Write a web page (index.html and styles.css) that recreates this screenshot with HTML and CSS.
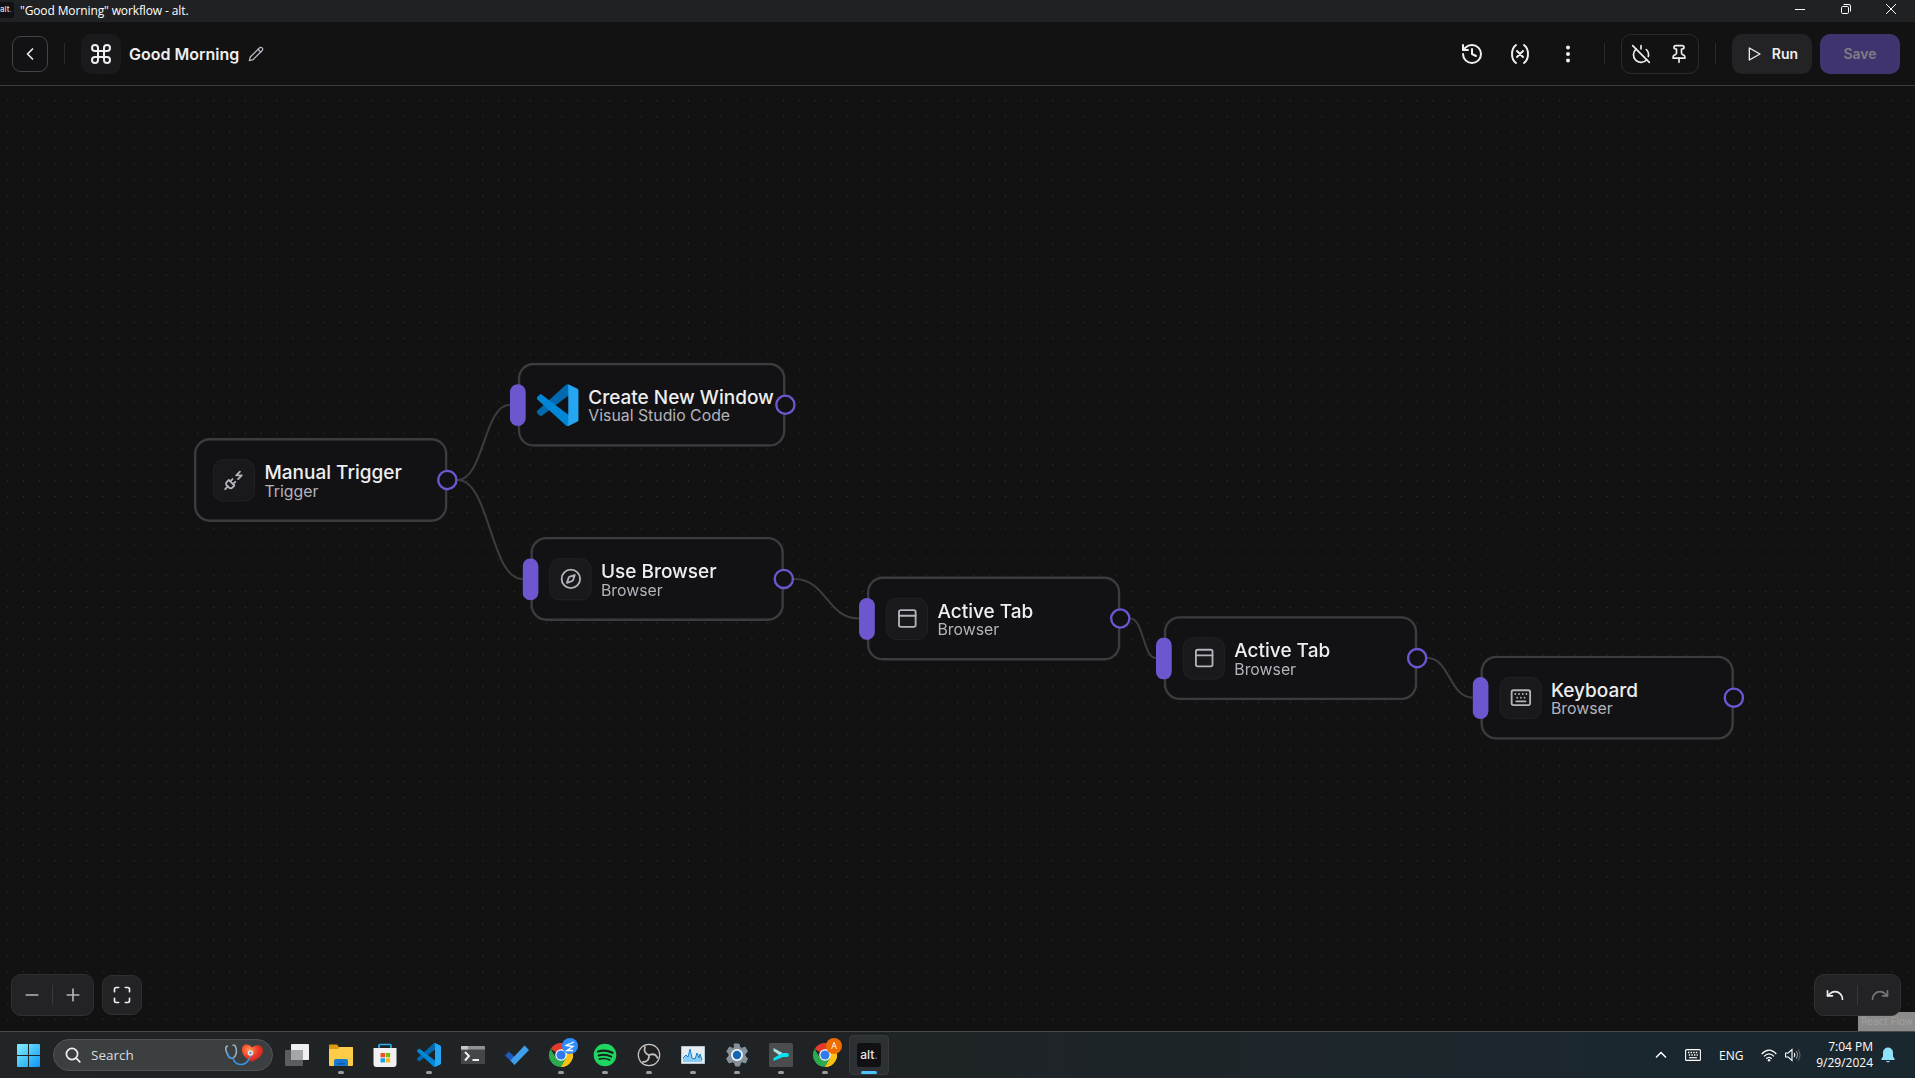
FILE: index.html
```html
<!DOCTYPE html>
<html lang="en">
<head>
<meta charset="utf-8">
<title>"Good Morning" workflow - alt.</title>
<link rel="stylesheet" href="styles.css">
</head>
<body>
<svg class="sprite" aria-hidden="true">
  <symbol id="vscode" viewBox="0 0 100 100">
    <path fill="#0069b0" d="M96.46 10.8 75.86.88C73.47-.27 70.62.21 68.75 2.08L1.3 63.58c-1.82 1.66-1.82 4.51 0 6.17l5.51 5c1.49 1.35 3.73 1.45 5.32.24L93.36 13.37c2.73-2.07 6.64-.12 6.64 3.3v-.24c0-2.4-1.38-4.59-3.54-5.63Z"/>
    <path fill="#0086d6" d="m96.46 89.2-20.6 9.92c-2.39 1.15-5.24.67-7.11-1.2L1.3 36.42c-1.82-1.66-1.82-4.51 0-6.17l5.51-5c1.49-1.35 3.73-1.45 5.32-.24l81.23 61.62c2.73 2.07 6.64.12 6.64-3.3v.24c0 2.4-1.38 4.59-3.54 5.63Z"/>
    <path fill="#26a6f2" d="M75.86 99.13c-2.39 1.14-5.24.66-7.11-1.21C71.06 100.22 75 98.59 75 95.33V4.67c0-3.26-3.94-4.89-6.25-2.59C70.62.21 73.47-.27 75.86.87l20.6 9.91c2.16 1.04 3.54 3.23 3.54 5.63v67.18c0 2.4-1.38 4.59-3.54 5.63l-20.6 9.91Z"/>
  </symbol>
  <symbol id="panel" viewBox="0 0 24 24"><rect x="3" y="3" width="18" height="18" rx="2"/><path d="M3 9h18"/></symbol>
  <symbol id="chrome" viewBox="0 0 24 24">
    <path fill="#e33b2e" d="M12 12 1.6 6A12 12 0 0 1 22.4 6Z"/>
    <path fill="#fbc116" d="M12 12 22.4 6A12 12 0 0 1 12 24Z"/>
    <path fill="#fbc116" d="M12 6.2h10.5A12 12 0 0 1 12 24l5-9Z"/>
    <path fill="#2da94f" d="M1.6 6A12 12 0 0 0 12 24l5.2-9-9.8.4Z"/>
    <circle cx="12" cy="12" r="5.8" fill="#fff"/><circle cx="12" cy="12" r="4.6" fill="#3079ee"/>
  </symbol>
</svg>

<div class="titlebar">
  <span class="app-mark">alt<i>.</i></span>
  <span class="window-title">"Good Morning" workflow - alt.</span>
  <div class="window-buttons">
    <svg width="10" height="10" viewBox="0 0 10 10"><path d="M0 5.5h10"/></svg>
    <svg width="10" height="10" viewBox="0 0 10 10"><rect x=".5" y="2.5" width="7" height="7" rx="1.2"/><path d="M2.5.5H8A1.5 1.5 0 0 1 9.5 2v5.5"/></svg>
    <svg width="10" height="10" viewBox="0 0 10 10"><path d="m0 0 10 10M10 0 0 10"/></svg>
  </div>
</div>

<header class="header">
  <button class="back"><svg class="icon s20" viewBox="0 0 24 24"><path d="m15 18-6-6 6-6"/></svg></button>
  <span class="divider d-left"></span>
  <span class="flow-icon"><svg class="icon s24" viewBox="0 0 24 24"><path d="M15 6v12a3 3 0 1 0 3-3H6a3 3 0 1 0 3 3V6a3 3 0 1 0-3 3h12a3 3 0 1 0-3-3"/></svg></span>
  <h1 class="flow-name">Good Morning</h1>
  <svg class="icon s16 pencil" viewBox="0 0 24 24"><path d="M17 3a2.85 2.83 0 1 1 4 4L7.5 20.5 2 22l1.500-5.500Z"/><path d="m15 5 4 4"/></svg>
  <div class="actions">
    <button class="icon-button"><svg class="icon s24" viewBox="0 0 24 24"><path d="M3 12a9 9 0 1 0 9-9 9.750 9.750 0 0 0-6.740 2.740L3 8"/><path d="M3 3v5h5"/><path d="M12 7v5l4 2"/></svg></button>
    <button class="icon-button"><svg class="icon s24" viewBox="0 0 24 24"><path d="M8 21s-4-3-4-9 4-9 4-9"/><path d="M16 3s4 3 4 9-4 9-4 9"/><path d="m15 9-6 6M9 9l6 6"/></svg></button>
    <button class="icon-button"><svg class="s24 solid" viewBox="0 0 24 24"><circle cx="12" cy="5.500" r="2"/><circle cx="12" cy="12" r="2"/><circle cx="12" cy="18.500" r="2"/></svg></button>
    <span class="divider d-mid"></span>
    <div class="toggle-group">
      <svg class="icon s20" viewBox="0 0 24 24"><path d="M18.360 6.640A9 9 0 0 1 20.770 15"/><path d="M6.160 6.160a9 9 0 1 0 12.680 12.680"/><path d="M12 2v4"/><path d="m2 2 20 20"/></svg>
      <svg class="icon s20" viewBox="0 0 24 24"><path d="M12 17v5"/><path d="M5 17h14v-1.760a2 2 0 0 0-1.110-1.790l-1.780-.9A2 2 0 0 1 15 10.760V6h1a2 2 0 0 0 0-4H8a2 2 0 0 0 0 4h1v4.760a2 2 0 0 1-1.110 1.790l-1.780.9A2 2 0 0 0 5 15.240Z"/></svg>
    </div>
    <span class="divider d-right"></span>
    <button class="button run"><svg class="icon s16" viewBox="0 0 24 24"><path d="m5 3 16 9-16 9z"/></svg>Run</button>
    <button class="button save">Save</button>
  </div>
</header>

<main class="canvas">
  <svg class="grid" width="100%" height="100%">
    <defs><pattern id="dots" x="7.200" y="14.200" width="15.834" height="15.834" patternUnits="userSpaceOnUse"><circle cx=".6" cy=".6" r=".6" fill="#3a3a3d"/></pattern></defs>
    <rect width="100%" height="100%" fill="url(#dots)"/>
  </svg>
  <div class="viewport">
    <svg class="edges" width="1" height="1">
      <path d="M333 53C366 53 366 -42 399 -42"/>
      <path d="M333 53C374 53 374 178 415 178"/>
      <path d="M758 178C799 178 799 228 840 228"/>
      <path d="M1183 228C1199 228 1199 278 1215 278"/>
      <path d="M1558 278C1586 278 1586 328 1615 328"/>
    </svg>
    <div class="node n-trigger">
      <span class="node-icon"><svg class="icon" viewBox="0 0 24 24"><path d="M6.300 20.300a2.400 2.400 0 0 0 3.400 0L12 18l-6-6-2.300 2.300a2.400 2.400 0 0 0 0 3.400Z"/><path d="m2 22 3-3"/><path d="M7.500 13.500 10 11"/><path d="M10.500 16.500 13 14"/><path d="m18 3-4 4h6l-4 4"/></svg></span>
      <div class="node-text"><b>Manual Trigger</b><span>Trigger</span></div>
      <i class="port-out"></i>
    </div>
    <div class="node n-vscode">
      <i class="port-in"></i>
      <svg class="node-logo"><use href="#vscode"/></svg>
      <div class="node-text"><b>Create New Window</b><span>Visual Studio Code</span></div>
      <i class="port-out"></i>
    </div>
    <div class="node n-browser">
      <i class="port-in"></i>
      <span class="node-icon"><svg class="icon" viewBox="0 0 24 24"><circle cx="12" cy="12" r="10"/><path d="m16.240 7.760-1.804 5.411a2 2 0 0 1-1.265 1.265L7.760 16.240l1.804-5.411a2 2 0 0 1 1.265-1.265z"/></svg></span>
      <div class="node-text"><b>Use Browser</b><span>Browser</span></div>
      <i class="port-out"></i>
    </div>
    <div class="node n-tab-a">
      <i class="port-in"></i>
      <span class="node-icon"><svg class="icon"><use href="#panel"/></svg></span>
      <div class="node-text"><b>Active Tab</b><span>Browser</span></div>
      <i class="port-out"></i>
    </div>
    <div class="node n-tab-b">
      <i class="port-in"></i>
      <span class="node-icon"><svg class="icon"><use href="#panel"/></svg></span>
      <div class="node-text"><b>Active Tab</b><span>Browser</span></div>
      <i class="port-out"></i>
    </div>
    <div class="node n-keyboard">
      <i class="port-in"></i>
      <span class="node-icon"><svg class="icon" viewBox="0 0 24 24"><rect x="2" y="4" width="20" height="16" rx="2"/><path d="M6 8h.01M10 8h.01M14 8h.01M18 8h.01M8 12h.01M12 12h.01M16 12h.01M7 16h10"/></svg></span>
      <div class="node-text"><b>Keyboard</b><span>Browser</span></div>
      <i class="port-out"></i>
    </div>
  </div>
  <span class="attribution">React Flow</span>
  <div class="controls">
    <div class="control-group zoom-group">
      <svg class="icon s20 dim" viewBox="0 0 24 24"><path d="M5 12h14"/></svg>
      <span class="bar"></span>
      <svg class="icon s20 dim" viewBox="0 0 24 24"><path d="M5 12h14M12 5v14"/></svg>
    </div>
    <div class="control-group fit"><svg class="icon s20" viewBox="0 0 24 24"><path d="M8 3H5a2 2 0 0 0-2 2v3M21 8V5a2 2 0 0 0-2-2h-3M3 16v3a2 2 0 0 0 2 2h3M16 21h3a2 2 0 0 0 2-2v-3"/></svg></div>
    <div class="control-group history-group">
      <svg class="icon s20" viewBox="0 0 24 24"><path d="M3 7v6h6"/><path d="M21 17a9 9 0 0 0-9-9 9 9 0 0 0-6 2.300L3 13"/></svg>
      <span class="bar"></span>
      <svg class="icon s20 off" viewBox="0 0 24 24"><path d="M21 7v6h-6"/><path d="M3 17a9 9 0 0 1 9-9 9 9 0 0 1 6 2.300l3 2.700"/></svg>
    </div>
  </div>
</main>

<footer class="taskbar">
  <svg class="start" width="23" height="23" viewBox="0 0 23 23"><defs><linearGradient id="win" x1="0" y1="0" x2="1" y2="1"><stop offset="0" stop-color="#84f0ff"/><stop offset="1" stop-color="#0a96f5"/></linearGradient></defs><path fill="url(#win)" d="M0 1a1 1 0 0 1 1-1h10v11H0zM12 0h10a1 1 0 0 1 1 1v10H12zM0 12h11v11H1a1 1 0 0 1-1-1zM12 12h11v10a1 1 0 0 1-1 1H12z"/></svg>
  <div class="search">
    <svg width="16" height="16" viewBox="0 0 16 16" fill="none" stroke="#f0f0f0" stroke-width="1.700" stroke-linecap="round"><circle cx="7" cy="7" r="5.600"/><path d="m11.200 11.200 3.600 3.600"/></svg>
    <span>Search</span>
    <svg class="health" width="38" height="22" viewBox="0 0 38 22">
      <defs><radialGradient id="heart" cx=".35" cy=".3" r=".8"><stop offset="0" stop-color="#ff9a55"/><stop offset=".5" stop-color="#ee3d28"/><stop offset="1" stop-color="#b81c1c"/></radialGradient></defs>
      <path fill="url(#heart)" d="M27 3.500C24-1 16-.5 17 7c.8 5 5 8 9.500 11C32 15.500 38 12 38 6.500 38 1.500 31-.5 27 3.500Z"/>
      <path fill="none" stroke="#9fb2c2" stroke-width="1.500" d="M3 2C0 2 .5 6 2 9.500c1.500 4 3.500 5.500 6 4.500 3-1.500 4-6 3-10C10.500 1.500 9 .5 7.500 1.500"/>
      <path fill="none" stroke="#3994e0" stroke-width="1.600" d="M2 8c1.500 5 3.500 7 6 6 .5 4 4 7 8.500 6.500C22 20 25 15 25.500 10"/>
      <circle cx="25.500" cy="9" r="2.800" fill="#dfe5ea"/><circle cx="25.500" cy="9" r="1.200" fill="#7d8c98"/>
    </svg>
  </div>
  <div class="apps">
    <span class="app"><svg width="24" height="24" viewBox="0 0 24 24"><rect y="7" width="18" height="16" rx="1" fill="#5b5d5e"/><rect x="6" y="1" width="18" height="16" rx="1" fill="#efefef"/><path fill="#a5a6a7" d="M6 7h12v10H7a1 1 0 0 1-1-1z"/></svg></span>
    <span class="app open"><svg width="24" height="24" viewBox="0 0 24 24"><path fill="#dc9a0c" d="M0 2.500a1 1 0 0 1 1-1h7l2 2.500h13a1 1 0 0 1 1 1V9H0z"/><path fill="#fdcc48" d="M0 6h9l1.500-2H23a1 1 0 0 1 1 1v17a1 1 0 0 1-1 1H1a1 1 0 0 1-1-1z"/><path fill="#1679cf" d="M5 23v-5a2 2 0 0 1 2-2h10a2 2 0 0 1 2 2v5z"/><path fill="#0f5da8" d="M8 20h8v1.500H8z"/></svg></span>
    <span class="app"><svg width="24" height="24" viewBox="0 0 24 24"><path fill="none" stroke="#2bb0f2" stroke-width="1.700" d="M6 6V2.500A1 1 0 0 1 7 1.500h10a1 1 0 0 1 1 1V6"/><path fill="#f1f1f1" d="M.5 5h23v16a3 3 0 0 1-3 3h-17a3 3 0 0 1-3-3z"/><path fill="#f04e25" d="M7.500 10H12v4.300H7.500z"/><path fill="#7db90b" d="M12.800 10h4.400v4.300h-4.400z"/><path fill="#16a3ec" d="M7.500 15.200H12v4.300H7.500z"/><path fill="#fcb813" d="M12.800 15.200h4.400v4.300h-4.400z"/></svg></span>
    <span class="app open"><svg width="24" height="24"><use href="#vscode"/></svg></span>
    <span class="app"><svg width="24" height="24" viewBox="0 0 24 24"><path fill="#444647" d="M0 5h24v15a1 1 0 0 1-1 1H1a1 1 0 0 1-1-1z"/><path fill="#909294" d="M0 4a1 1 0 0 1 1-1h22a1 1 0 0 1 1 1v2.500H0z"/><path fill="#c6c7c8" d="M0 4a1 1 0 0 1 1-1h6v3.500H0z"/><path fill="none" stroke="#f0f0f0" stroke-width="2" d="m4 9 4 4-4 4.500M11.500 17H18"/></svg></span>
    <span class="app"><svg width="24" height="24" viewBox="0 0 24 24"><path fill="#1c5bbb" d="m0 12.500 4-4L13 17l-4 4.500z"/><path fill="#409fea" d="m5.500 17.500 14-15L24 7 9.500 22z"/></svg></span>
    <span class="app open"><svg width="24" height="24"><use href="#chrome"/></svg><em class="badge blue"><svg width="10" height="11" viewBox="0 0 10 11" fill="none" stroke="#fff" stroke-width="1.300"><path d="M9 1 1 4.500l7 1L2 9.500h6"/></svg></em></span>
    <span class="app open"><svg width="24" height="24" viewBox="0 0 24 24"><circle cx="12" cy="12" r="11.300" fill="#1fd760"/><path fill="none" stroke="#16211b" stroke-linecap="round" d="M5 8.500q7.500-2.200 14.500 1.300" stroke-width="2.300"/><path fill="none" stroke="#16211b" stroke-linecap="round" d="M5.700 12.500q6.500-1.800 12.500 1.100" stroke-width="2"/><path fill="none" stroke="#16211b" stroke-linecap="round" d="M6.300 16q5.500-1.400 10.500 1" stroke-width="1.600"/></svg></span>
    <span class="app open"><svg width="24" height="24" viewBox="0 0 24 24"><circle cx="12" cy="12" r="10.700" fill="#211f20" stroke="#c8c8c8" stroke-width="1.200"/><g fill="none" stroke="#bdbdbd" stroke-width="1.800" stroke-linecap="round"><path d="M8 4c-1.500 4 .5 7 4 8"/><path d="M12 12c4-1.500 7-.5 8.500 3"/><path d="M12 12c.5 4-1.500 7-6 7"/></g></svg></span>
    <span class="app open"><svg width="24" height="24" viewBox="0 0 24 24"><path fill="#e6edf2" stroke="#bac7d0" d="M.5 3.500h23v17H.5z"/><path fill="#8accf3" d="M2 19v-4l3-3 2 2 2-8 2 9 3 1 2-6 2 5 1-4 2 6v2z"/><path fill="none" stroke="#1582d0" d="m2 15 3-3 2 2 2-8 2 9 3 1 2-6 2 5 1-4 2 6"/></svg></span>
    <span class="app open"><svg width="24" height="24" viewBox="0 0 24 24"><path fill="#85919c" stroke="#85919c" stroke-linejoin="round" d="m9 1 .7 3.200-2 1.200L4.500 4 1.800 8.500 4 11v2l-2.500 2.500L4 20l3.700-1.200 2 1.200.7 3h4.200l.7-3 2-1.200L20.500 20l2-4.500L20 13v-2l2.500-2.500L20 4l-3.200 1.400-2-1.200L14 1z"/><circle cx="12" cy="12" r="6" fill="#f0f4f7"/><circle cx="12" cy="12" r="4.200" fill="#1464b4"/></svg></span>
    <span class="app open"><svg width="24" height="24" viewBox="0 0 24 24"><rect width="24" height="24" rx="1.500" fill="#4a4c4e"/><path fill="#a6e3e6" d="m4.500 5 9 5-2 3-7-5z"/><path fill="#08e0ee" d="M4.500 18V15l9-5H18a2 2 0 0 1 0 4h-4z"/></svg></span>
    <span class="app open"><svg width="24" height="24"><use href="#chrome"/></svg><em class="badge orange">A</em></span>
    <span class="app open active"><b class="alt">alt<i>.</i></b></span>
  </div>
  <div class="tray">
    <svg class="t-chev" width="12" height="8" viewBox="0 0 12 8"><path d="m1 6.500 5-5 5 5" stroke-width="1.500"/></svg>
    <svg class="t-key" width="16" height="12" viewBox="0 0 16 12"><rect x=".6" y=".6" width="14.800" height="10.800" rx="1"/><path stroke-width="1.400" stroke-dasharray="1.400 1.200" d="M3 3.500h10.500M3.800 6h9"/><path d="M4 8.700h8"/></svg>
    <span class="lang">ENG</span>
    <svg class="t-wifi" width="16" height="13" viewBox="0 0 16 13"><path stroke-width="1.300" d="M.7 5Q8-2.800 15.300 5M3 7.400q5-5 10 0M5.300 9.700q2.700-2.600 5.400 0"/><circle cx="8" cy="11.300" r="1.200" fill="#fff" stroke="none"/></svg>
    <svg class="t-vol" width="16" height="14" viewBox="0 0 16 14"><path d="M.6 5v4h2.600L7 12.500v-11L3.200 5z"/><path d="M9.200 5q1.300 2 0 4"/><path stroke="#8c959b" d="M11.200 3.300q2.600 3.700 0 7.400"/><path stroke="#57636b" d="M13 1.500q4 5.500 0 11"/></svg>
    <div class="clock"><span>7:04 PM</span><span>9/29/2024</span></div>
    <svg class="t-bell" width="14" height="16" viewBox="0 0 14 16"><path fill="#8fe2fb" stroke="none" d="M7 .5a5 5 0 0 1 5 5v4l1.600 2.300q.3 1.200-.6 1.200H1q-.9 0-.6-1.200L2 9.500v-4a5 5 0 0 1 5-5ZM4.800 14h4.400Q7 16.800 4.800 14Z"/></svg>
  </div>
</footer>
</body>
</html>
```
FILE: styles.css
```css
* { box-sizing: border-box; }
body {
  margin: 0;
  width: 1915px;
  height: 1078px;
  overflow: hidden;
  display: flex;
  flex-direction: column;
  background: #121213;
  color: #eeeef0;
  font-family: Inter, sans-serif;
}
button { font: inherit; color: inherit; border: 0; padding: 0; background: none; }
i, em { font-style: normal; }
.sprite { position: absolute; width: 0; height: 0; }
svg { display: block; flex: none; }
.icon { fill: none; stroke: currentColor; stroke-width: 2; stroke-linecap: round; stroke-linejoin: round; }
.solid { fill: currentColor; }
.s16 { width: 16px; height: 16px; }
.s20 { width: 20px; height: 20px; }
.s24 { width: 24px; height: 24px; }

/* Window title bar */
.titlebar { height: 22px; flex: none; display: flex; align-items: center; background: #1f2123; }
.app-mark { width: 14px; height: 16px; margin-top: -2px; background: #111113; border-radius: 0 3px 3px 0; font: 500 8px/15px Inter, sans-serif; color: #ddd; }
.app-mark i, .alt i { color: #6e56cf; }
.window-title { margin-left: 6px; font: 12px/20px "Open Sans", "Noto Sans", sans-serif; letter-spacing: -.12px; color: #fff; white-space: nowrap; }
.window-buttons { margin-left: auto; display: flex; gap: 35.500px; padding-right: 19px; margin-top: -4px; fill: none; stroke: #fff; }

/* Workflow header */
.header { height: 64px; flex: none; display: flex; align-items: center; padding: 0 15px 0 12px; border-bottom: 1px solid #3c3c40; }
.back { width: 36px; height: 36px; display: grid; place-items: center; border: 1px solid #43434a; border-radius: 9px; background: #121214; }
.divider { width: 1px; height: 21px; background: #2b2b2e; }
.d-left { margin: 0 16px; }
.flow-icon { width: 40px; height: 40px; display: grid; place-items: center; border-radius: 10px; background: #1a1a1c; }
.flow-name { margin: 0 0 0 8px; font-size: 16px; font-weight: 600; line-height: 24px; }
.pencil { margin-left: 9px; color: #b5b2bc; }
.actions { margin-left: auto; display: flex; align-items: center; }
.icon-button { width: 40px; height: 40px; margin-right: 8px; display: grid; place-items: center; }
.d-mid { margin: 0 16px 0 8px; }
.toggle-group { width: 78px; height: 40px; display: flex; align-items: center; justify-content: center; gap: 18px; border: 1px solid #2b2b2e; border-radius: 10px; }
.d-right { margin: 0 16px; }
.button { width: 80px; height: 40px; display: flex; align-items: center; justify-content: center; gap: 10px; border-radius: 10px; font-size: 14px; font-weight: 600; }
.run { background: #232325; }
.save { margin-left: 8px; background: #40346e; color: #807d87; }

/* Node canvas */
.canvas { position: relative; flex: 1; overflow: hidden; }
.grid { position: absolute; inset: 0; }
.viewport { position: absolute; left: 194px; top: 351.700px; transform: scale(.7917); transform-origin: 0 0; }
.edges { position: absolute; left: 0; top: 0; overflow: visible; fill: none; stroke: #3c3c40; stroke-width: 2.600; }
.node { position: absolute; width: 320px; height: 106px; display: flex; align-items: center; gap: 12px; padding: 0 21px; border: 3px solid #3c3c40; border-radius: 20px; background: #121214; }
.n-trigger { left: 0; top: 0; }
.n-vscode { left: 409px; top: -95px; width: 338px; }
.n-browser { left: 425px; top: 125px; }
.n-tab-a { left: 850px; top: 175px; }
.n-tab-b { left: 1225px; top: 225px; }
.n-keyboard { left: 1625px; top: 275px; }
.node-icon { width: 53px; height: 53px; flex: none; display: grid; place-items: center; border: 1px solid #262628; border-radius: 13px; background: #19191b; color: #b5b2bc; }
.node-icon svg { width: 28px; height: 28px; }
.node-logo { width: 53px; height: 53px; }
.node-text { display: flex; flex-direction: column; white-space: nowrap; }
.node-text b { font-size: 24px; line-height: 27px; font-weight: 500; color: #eeeef0; }
.node-text span { font-size: 20px; line-height: 20px; color: #b5b2bc; }
.port-out { position: absolute; right: -16px; top: 37px; width: 26px; height: 26px; border: 3px solid #6e56cf; border-radius: 50%; background: #121214; }
.port-in { position: absolute; left: -13px; top: 23.500px; width: 20px; height: 53px; border-radius: 10px; background: #6e56cf; }

.controls { position: absolute; left: 11px; right: 14px; bottom: 15px; display: flex; align-items: center; gap: 8px; }
.control-group { height: 42px; display: flex; align-items: center; justify-content: center; border: 1px solid #303033; border-radius: 10px; background: #232325; }
.zoom-group { width: 83px; gap: 10px; }
.fit { width: 40px; height: 40px; }
.history-group { width: 87px; gap: 12px; margin-left: auto; }
.bar { width: 1px; height: 20px; background: #39393c; }
.dim { color: #b5b2bc; }
.off { color: #77757c; }
.attribution { position: absolute; right: 0; bottom: 0; width: 57px; height: 19px; padding-left: 3px; background: #8b8b8b; color: #a0a0a0; font-size: 10px; line-height: 19px; white-space: nowrap; }

/* Windows taskbar */
.taskbar { height: 47px; flex: none; display: flex; align-items: center; padding-left: 17px; border-top: 1px solid #48494b; background: linear-gradient(90deg, #202425, #1f2325 45%, #1b272e 85%); font-family: "Open Sans", "Noto Sans", sans-serif; }
.search { width: 220px; height: 32px; margin-left: 13px; padding: 0 9px 0 11px; display: flex; align-items: center; border: 1px solid #505455; border-radius: 16px; background: #3b3f40; font-size: 13.500px; color: #dadcdc; }
.search span { margin-left: 10px; }
.health { margin-left: auto; }
.apps { display: flex; margin-left: 4px; gap: 4px; }
.app { position: relative; width: 40px; height: 40px; display: grid; place-items: center; border-radius: 4px; }
.open::after { content: ""; position: absolute; left: 17px; bottom: 1px; width: 6px; height: 3px; border-radius: 2px; background: #9a9c9d; }
.active { background: #2d3133; border: 1px solid #363a3c; }
.active::after { left: 11px; bottom: 0; width: 16px; background: #4cc2ff; }
.alt { width: 24px; height: 24px; border-radius: 3px; background: #111113; font: 500 12px/23px Inter, sans-serif; text-align: center; color: #e8e8ea; }
.badge { position: absolute; left: 21px; top: 3px; width: 16px; height: 16px; display: grid; place-items: center; border-radius: 50%; font: 9px/16px "Open Sans", sans-serif; color: #fff; }
.blue { background: #2d8cff; }
.orange { background: #ef6c00; }
.tray { margin-left: auto; display: flex; align-items: center; fill: none; stroke: #fff; stroke-width: 1.100; font-size: 12px; color: #fff; }
.t-key { margin-left: 18px; }
.lang { width: 24px; margin: 0 18px; }
.t-vol { margin-left: 8px; }
.clock { width: 72px; display: flex; flex-direction: column; text-align: right; line-height: 16px; }
.t-bell { margin: 0 20px 0 8px; }
```
